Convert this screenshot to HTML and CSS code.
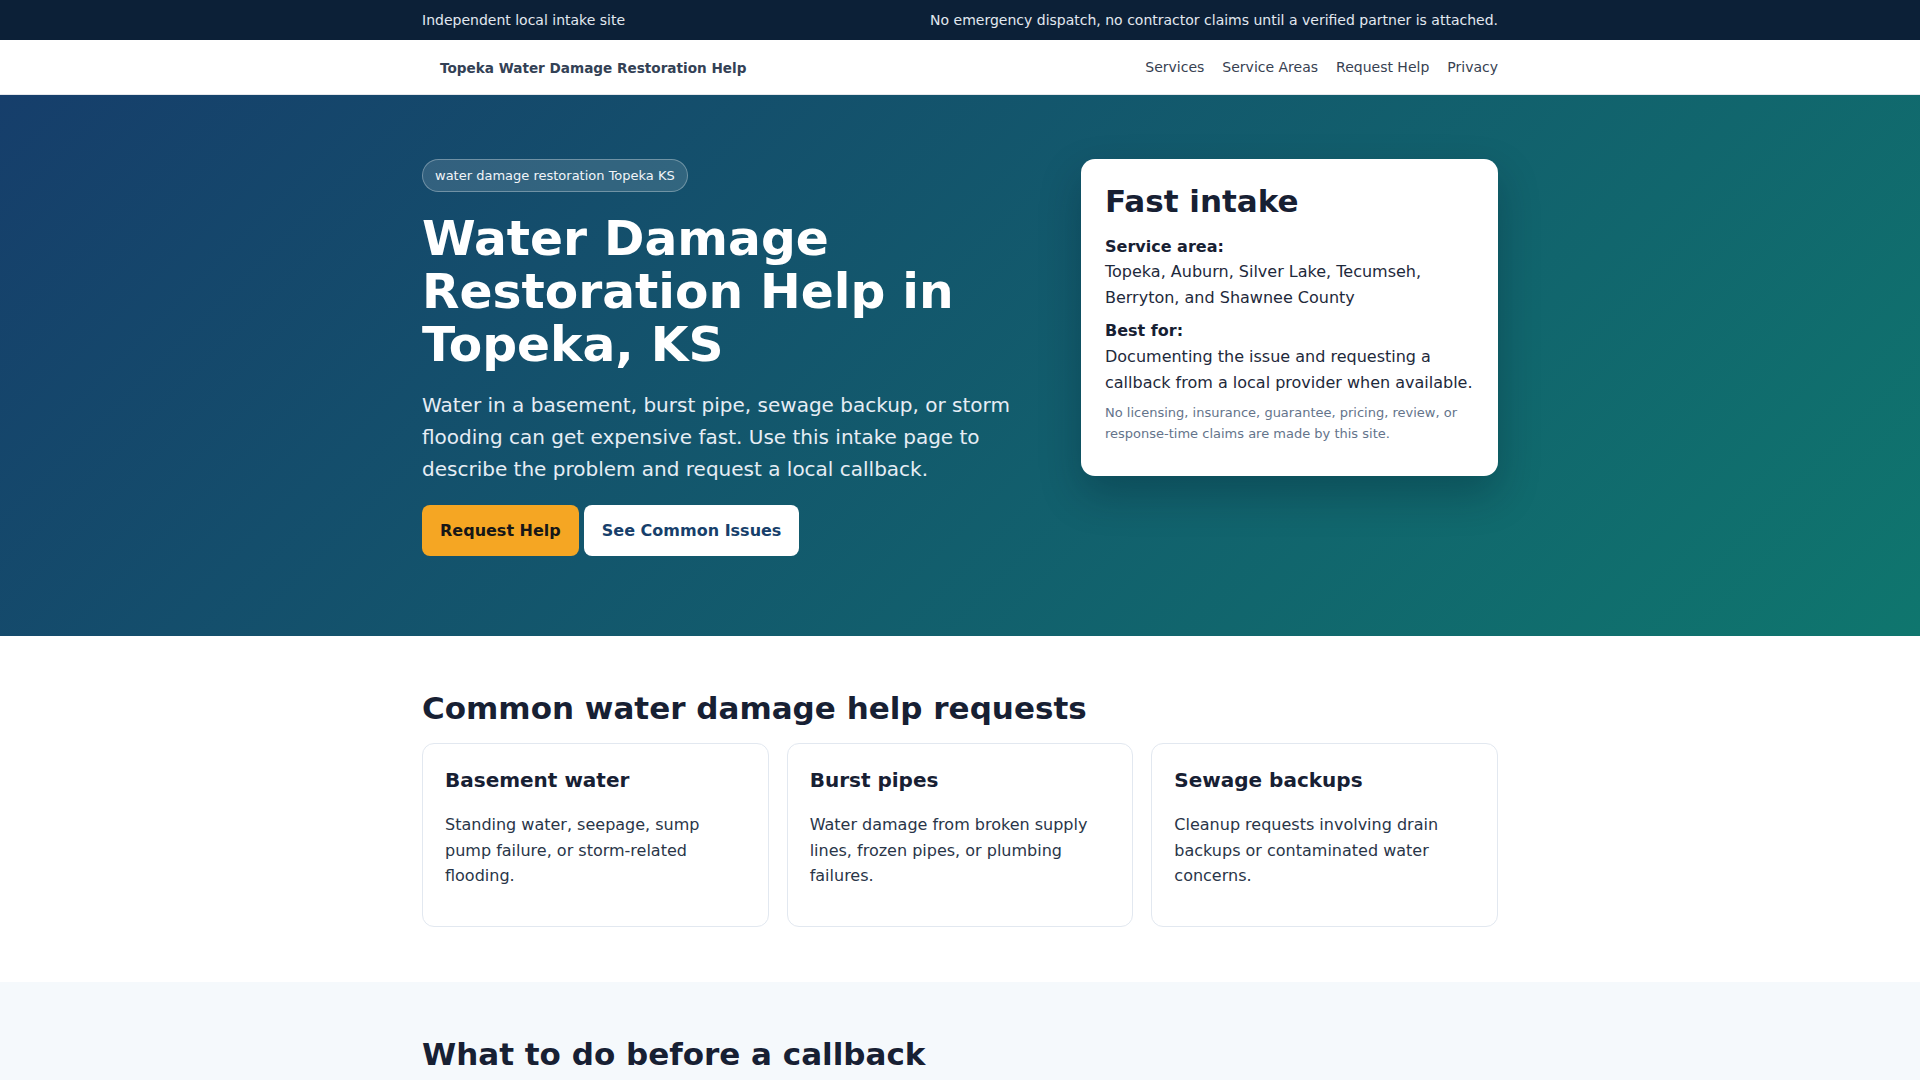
FILE: index.html
```html
<!DOCTYPE html>
<html lang="en">
<head>
<meta charset="utf-8">
<title>Topeka Water Damage Restoration Help</title>
<link rel="stylesheet" href="styles.css">
</head>
<body>
<div class="topbar">
  <div class="container topbar-inner">
    <span>Independent local intake site</span>
    <span>No emergency dispatch, no contractor claims until a verified partner is attached.</span>
  </div>
</div>
<header class="nav">
  <div class="container nav-inner">
    <a class="brand" href="#">Topeka Water Damage Restoration Help</a>
    <nav class="links">
      <a href="#services">Services</a>
      <a href="#areas">Service Areas</a>
      <a href="#help">Request Help</a>
      <a href="#privacy">Privacy</a>
    </nav>
  </div>
</header>
<section class="hero">
  <div class="container hero-grid">
    <div class="hero-copy">
      <span class="pill">water damage restoration Topeka KS</span>
      <h1>Water Damage Restoration Help in Topeka, KS</h1>
      <p class="lead">Water in a basement, burst pipe, sewage backup, or storm flooding can get expensive fast. Use this intake page to describe the problem and request a local callback.</p>
      <div class="actions">
        <a class="btn btn-primary" href="#help">Request Help</a>
        <a class="btn btn-light" href="#services">See Common Issues</a>
      </div>
    </div>
    <aside class="intake">
      <h2>Fast intake</h2>
      <p><strong>Service area:</strong><br>Topeka, Auburn, Silver Lake, Tecumseh, Berryton, and Shawnee County</p>
      <p><strong>Best for:</strong><br>Documenting the issue and requesting a callback from a local provider when available.</p>
      <p class="small">No licensing, insurance, guarantee, pricing, review, or response-time claims are made by this site.</p>
    </aside>
  </div>
</section>
<section class="section" id="services">
  <div class="container">
    <h2 class="section-title">Common water damage help requests</h2>
    <div class="cards">
      <article class="card">
        <h3>Basement water</h3>
        <p>Standing water, seepage, sump pump failure, or storm-related flooding.</p>
      </article>
      <article class="card">
        <h3>Burst pipes</h3>
        <p>Water damage from broken supply lines, frozen pipes, or plumbing failures.</p>
      </article>
      <article class="card">
        <h3>Sewage backups</h3>
        <p>Cleanup requests involving drain backups or contaminated water concerns.</p>
      </article>
    </div>
  </div>
</section>
<section class="section section-alt">
  <div class="container">
    <h2 class="section-title section-title-alt">What to do before a callback</h2>
    <ol class="steps">
      <li>Stop the water source if it is safe to do so.</li>
      <li>Take photos of affected areas before moving items.</li>
      <li>Write down when the problem started and what rooms are affected.</li>
    </ol>
  </div>
</section>
</body>
</html>
```

FILE: styles.css
```css
* { box-sizing: border-box; }
html, body { margin: 0; padding: 0; }
body {
  font-family: "DejaVu Sans", sans-serif;
  font-size: 16px;
  line-height: 1.6;
  color: #1e293b;
  background: #ffffff;
}
a { text-decoration: none; color: inherit; }

.container {
  width: 1076px;
  margin: 0 auto;
}

/* Top bar */
.topbar {
  background: #0c2037;
  color: #e2e8f0;
  font-size: 14px;
  line-height: 20px;
}
.topbar-inner {
  display: flex;
  justify-content: space-between;
  align-items: center;
  height: 40px;
}

/* Nav */
.nav {
  background: #ffffff;
  border-bottom: 1px solid #e5e7eb;
}
.nav-inner {
  height: 54px;
  display: flex;
  align-items: center;
  justify-content: space-between;
}
.brand {
  font-size: 13.6px;
  line-height: 20px;
  font-weight: 700;
  color: #334155;
  padding: 1px 0 0 18px;
}
.links {
  display: flex;
  gap: 18px;
  font-size: 14px;
  line-height: 20px;
  color: #374151;
}

/* Hero */
.hero {
  background: linear-gradient(135deg, #163e6b 0%, #0f766e 100%);
  color: #ffffff;
  padding: 64px 0 80px;
}
.hero-grid {
  display: grid;
  grid-template-columns: minmax(0, 1fr) 417px;
  gap: 40px;
  align-items: start;
}
.pill {
  display: inline-block;
  font-size: 13px;
  line-height: 18px;
  padding: 6.5px 12px;
  border-radius: 999px;
  background: rgba(255, 255, 255, 0.13);
  border: 1px solid rgba(255, 255, 255, 0.3);
  color: #f1f5f9;
}
.hero h1 {
  font-size: 48.7px;
  line-height: 52.8px;
  font-weight: 700;
  margin: 20px 0 19px;
}
.lead {
  font-size: 20px;
  line-height: 32px;
  margin: 0 0 20px;
  color: #e6edf5;
}
.actions {
  display: flex;
  gap: 5px;
}
.btn {
  display: inline-block;
  font-size: 16px;
  font-weight: 700;
  line-height: 22px;
  padding: 14.5px 18px;
  border-radius: 8px;
}
.btn-primary {
  background: #f5a623;
  color: #171717;
}
.btn-light {
  background: #ffffff;
  color: #173f6b;
}

/* Intake card */
.intake {
  background: #ffffff;
  color: #1e293b;
  border-radius: 14px;
  padding: 24px 24px 23px;
  box-shadow: 0 18px 40px rgba(4, 20, 40, 0.28);
}
.intake h2 {
  font-size: 31px;
  line-height: 1.2;
  margin: 0 0 13.5px;
  color: #172033;
}
.intake p {
  margin: 0 0 8px;
}
.intake strong { color: #172033; }
.intake .small {
  font-size: 13px;
  line-height: 1.6;
  color: #64748b;
}

/* Sections */
.section {
  padding: 55px 0;
}
.section-alt {
  background: #f5f9fc;
}
.section-title {
  font-size: 31px;
  line-height: 1.15;
  font-weight: 700;
  color: #172033;
  margin: 0 0 15.5px;
}
.section-title-alt {
  margin-bottom: 24px;
}
.cards {
  display: grid;
  grid-template-columns: repeat(3, 1fr);
  gap: 18px;
}
.card {
  border: 1px solid #e2e8f0;
  border-radius: 12px;
  padding: 24px 22px 21px;
  background: #ffffff;
}
.card h3 {
  font-size: 20px;
  line-height: 1.25;
  margin: 0 0 19.5px;
  color: #172033;
}
.card p {
  margin: 0 0 16px;
  color: #293548;
}
.steps {
  margin: 0;
  padding-left: 22px;
  color: #293548;
}
.steps li { margin-bottom: 8px; }
```
